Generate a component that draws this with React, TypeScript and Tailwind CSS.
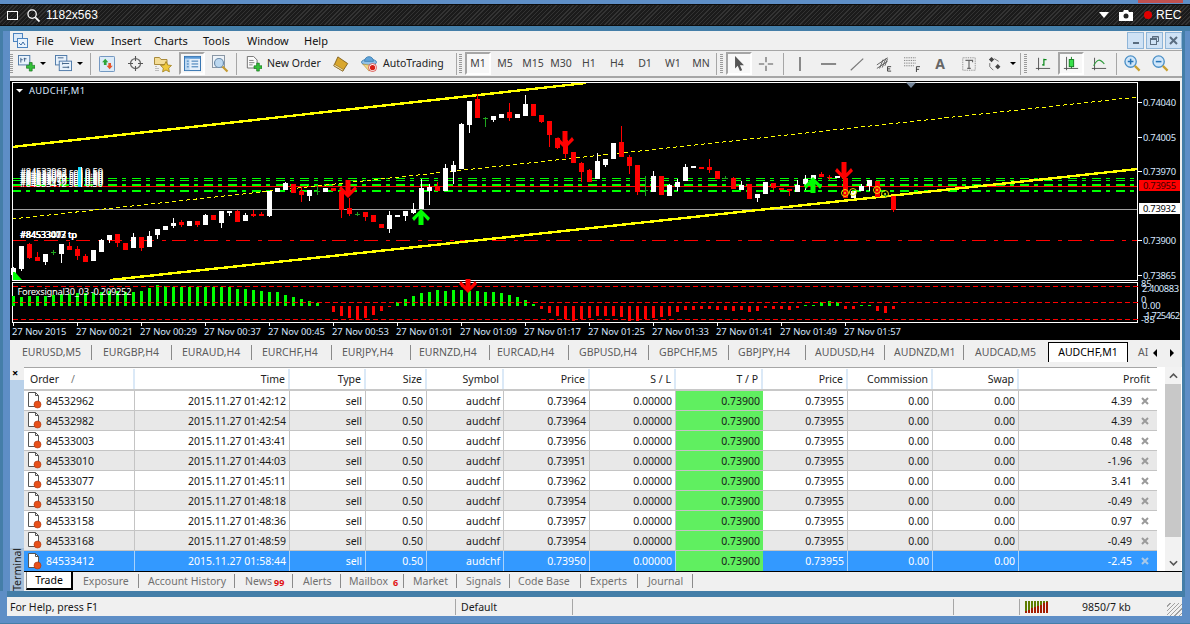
import React from 'react';

// [bodyTop, bodyBottom, wickTop, wickBottom, colour] measured on the 3x crops
type C = [number, number, number, number, string];
const candles: C[] = [
  [565,585,560,590,'w'],[498,568,498,572,'w'],[492,535,490,538,'r'],[531,543,516,543,'r'],[522,546,522,555,'w'],[516,518,510,525,'g'],
  [492,522,492,548,'w'],[498,510,486,510,'r'],[507,528,498,540,'r'],[528,546,522,546,'r'],[510,543,510,543,'w'],[480,516,477,516,'w'],
  [465,480,465,490,'w'],[462,489,462,500,'r'],[489,510,489,510,'r'],[471,504,459,504,'w'],[471,504,471,513,'r'],[468,502,453,502,'w'],
  [447,465,447,477,'w'],[438,450,438,450,'w'],[429,438,414,444,'w'],[426,435,420,441,'r'],[423,438,423,438,'w'],[423,435,423,441,'r'],
  [405,435,402,435,'w'],[405,420,405,420,'r'],[393,429,393,444,'w'],[393,399,393,408,'w'],[393,426,390,426,'r'],[405,423,399,423,'w'],
  [402,408,390,411,'r'],[402,408,396,408,'r'],[333,408,333,411,'w'],[324,336,324,336,'w'],[309,330,306,330,'w'],[312,339,312,339,'r'],
  [333,345,320,366,'r'],[330,348,330,363,'w'],[332,334,315,345,'g'],[324,336,324,336,'w'],[324,333,324,333,'r'],[333,390,333,414,'r'],
  [384,402,354,408,'r'],[401,403,396,408,'g'],[396,411,396,423,'r'],[405,426,405,426,'r'],[432,444,432,444,'r'],[405,447,393,459,'w'],
  [405,411,405,411,'w'],
  [393,408,393,423,'w'],[387,399,369,402,'w'],[324,387,297,387,'w'],[321,333,312,375,'w'],[318,333,305,333,'r'],[264,333,252,333,'w'],
  [255,275,243,312,'w'],[132,267,129,267,'w'],[63,135,63,159,'w'],[57,114,42,114,'r'],[113,115,112,141,'g'],[108,120,108,126,'w'],
  [102,114,102,114,'w'],[96,114,69,123,'r'],[102,114,102,114,'w'],[72,108,45,108,'w'],[72,108,72,108,'r'],[105,126,105,129,'r'],
  [123,165,123,201,'r'],[174,204,174,207,'r'],[180,222,180,234,'r'],[216,249,216,249,'r'],[249,276,246,306,'r'],[270,306,267,306,'r'],
  [243,297,219,297,'w'],[237,255,237,261,'w'],[189,237,189,237,'w'],[186,231,138,231,'r'],[231,258,225,282,'r'],[255,336,255,345,'r'],
  [329,331,288,348,'g'],[288,336,273,336,'w'],[288,345,288,345,'r'],[315,348,312,348,'w'],[306,321,297,333,'w'],[261,303,252,303,'w'],
  [258,264,258,264,'w'],[261,267,261,267,'r'],[261,270,237,279,'r'],[273,297,273,297,'r'],[293,295,288,297,'g'],[294,327,291,327,'r'],
  [315,330,303,330,'w'],[312,357,312,357,'r'],[342,354,342,366,'w'],[306,342,306,342,'w'],[309,324,309,330,'r'],[324,330,324,330,'r'],
  [327,333,327,348,'r'],[315,336,300,336,'w'],
  [297,312,285,330,'w'],[285,297,285,297,'w'],[282,291,276,291,'r'],[291,294,285,300,'r'],[288,294,288,294,'w'],[294,354,294,354,'r'],
  [333,354,333,354,'w'],[318,333,312,333,'w'],[300,318,300,333,'w'],[303,351,303,351,'r'],[344,346,340,350,'g'],[348,390,348,396,'r'],
];

const hist = [
  648,651,648,648,648,645,642,642,640,640,638,636,634,634,636,636,633,624,615,617,620,621,621,621,621,621,621,621,627,627,630,633,636,636,645,651,657,663,669,678,696,708,714,720,714,705,693,681,666,
  657,648,639,636,630,633,630,630,633,633,636,636,639,645,651,660,672,687,699,708,717,723,717,714,708,708,708,711,723,723,717,714,711,708,696,690,690,687,687,690,690,693,690,696,693,684,687,687,690,684,
  675,675,666,663,666,687,687,675,675,693,699,687,
];

const py = (z: number) => 80 + z / 3;
const candleFill: Record<string, string> = { w: '#ffffff', r: '#ff0000', g: '#1fa51f' };

const arrowDown = (cx: number, t: number, stem: number) =>
  `${cx - 2.5},${t} ${cx + 2.5},${t} ${cx + 2.5},${t + stem - 5} ${cx + 7},${t + stem - 10} ${cx + 9},${t + stem - 7} ${cx},${t + stem + 2} ${cx - 9},${t + stem - 7} ${cx - 7},${t + stem - 10} ${cx - 2.5},${t + stem - 5}`;
const arrowUp = (cx: number, b: number, stem: number) =>
  `${cx - 2.5},${b} ${cx + 2.5},${b} ${cx + 2.5},${b - stem + 5} ${cx + 7},${b - stem + 10} ${cx + 9},${b - stem + 7} ${cx},${b - stem - 2} ${cx - 9},${b - stem + 7} ${cx - 7},${b - stem + 10} ${cx - 2.5},${b - stem + 5}`;

const prices = [['0.74040', 102], ['0.74005', 137], ['0.73970', 171], ['0.73900', 240], ['0.73865', 275]] as const;
const times = ['27 Nov 2015','27 Nov 00:21','27 Nov 00:29','27 Nov 00:37','27 Nov 00:45','27 Nov 00:53','27 Nov 01:01','27 Nov 01:09','27 Nov 01:17','27 Nov 01:25','27 Nov 01:33','27 Nov 01:41','27 Nov 01:49','27 Nov 01:57'];
const axisText = '#d8e8ff';

const Chart = () => (
  <svg viewBox="10 81 1172 259" className="block w-[1172px] h-[259px] bg-black" fontFamily="'Noto Sans', sans-serif" fontSize="9.4">
    {/* horizontal levels */}
    <g shapeRendering="crispEdges" fill="none">
      <line x1="12" x2="1138" y1="209.5" y2="209.5" stroke="#a0a0a0" />
      <line x1="12" x2="1138" y1="240.5" y2="240.5" stroke="#ff0000" strokeDasharray="14 8 4 6" />
      <line x1="12" x2="1138" y1="178.5" y2="178.5" stroke="#00ff00" strokeDasharray="9 5 4 6" />
      <line x1="12" x2="1138" y1="180.5" y2="180.5" stroke="#00ff00" strokeDasharray="9 5 4 6" />
      <line x1="12" x2="1138" y1="185" y2="185" stroke="#00ff00" strokeWidth="2" strokeDasharray="9 5 4 6" />
      <line x1="12" x2="1138" y1="191" y2="191" stroke="#00ff00" strokeWidth="2" strokeDasharray="9 5 4 6" />
      <line x1="12" x2="1138" y1="186.5" y2="186.5" stroke="#ff0000" />
      <line x1="12" y1="219" x2="1138" y2="97" stroke="#ffff00" strokeDasharray="4 3" />
      <line x1="12" y1="147" x2="586" y2="83" stroke="#ffff00" strokeWidth="2.4" />
      <line x1="110" y1="280" x2="1138" y2="169" stroke="#ffff00" strokeWidth="2.4" />
    </g>

    {/* candles */}
    <g shapeRendering="crispEdges">
      {candles.map(([t, b, wt, wb, c], i) => (
        <g key={i} fill={candleFill[c]}>
          <rect x={13 + 8 * i} y={py(wt)} width="1" height={(wb - wt) / 3} />
          {c === 'g'
            ? <rect x={11 + 8 * i} y={py(t)} width="5" height="1" />
            : <rect x={11 + 8 * i} y={py(t)} width="5" height={(b - t) / 3} />}
        </g>
      ))}
    </g>

    {/* signal arrows */}
    <polygon points={arrowDown(348, 180, 16)} fill="#ff0000" />
    <polygon points={arrowDown(565, 131, 16)} fill="#ff0000" />
    <polygon points={arrowDown(844, 162, 16)} fill="#ff0000" />
    <polygon points={arrowUp(421, 225, 14)} fill="#00ff00" />
    <polygon points={arrowUp(813, 193, 14)} fill="#00ff00" />
    <polygon points="12,272 15,272 22,280 12,280" fill="#00ff00" />
    {[[845, 193], [853, 192], [877, 190], [885, 194]].map(([x, y]) => (
      <g key={x}>
        <circle cx={x} cy={y} r="3.5" fill="none" stroke="#e8e000" />
        <circle cx={x} cy={y} r="1" fill="#e8e000" />
      </g>
    ))}

    {/* overlapping order labels */}
    <g fill="#ffffff">
      {['#84532962 sell 0.50', '#84532982 sell 0.50', '#84533003 sell 0.50', '#84533010 sell 0.50', '#84533077 sell 0.50', '#84533150 sell 0.50', '#84533412 sell 0.50'].map((s, i) => (
        <text key={s} x="20" y={175 + i * 2} textLength="83" fontWeight="500">{s}</text>
      ))}
      <rect x="78" y="167" width="3" height="20" fill="#18dcff" />
      <rect x="81" y="167" width="1" height="20" />
      {['#84533003 tp', '#84533077 tp', '#84533412 tp'].map((s) => (
        <text key={s} x="20" y="238" textLength="57" fontWeight="500">{s}</text>
      ))}
    </g>

    {/* frames */}
    <g fill="none" stroke="#ffffff" shapeRendering="crispEdges">
      <rect x="12.5" y="82.5" width="1125" height="198" />
      <rect x="12.5" y="282.5" width="1125" height="40" />
    </g>
    <polygon points="906,82.5 916,82.5 911,88" fill="#75869a" />
    <polygon points="16,89 23,89 19.5,92.5" fill="#ffffff" />
    <text x="29" y="94" fill={axisText} textLength="56">AUDCHF,M1</text>

    {/* sub window */}
    <g shapeRendering="crispEdges">
      {hist.map((z, i) =>
        z < 678
          ? <rect key={i} x={12 + 8 * i} y={py(z)} width="3" height={(678 - z) / 3} fill="#00ff00" />
          : <rect key={i} x={12 + 8 * i} y={306} width="3" height={(z - 678) / 3} fill="#ff0000" />
      )}
      <line x1="13" x2="1138" y1="286.5" y2="286.5" stroke="#ff0000" strokeDasharray="5 3" />
      <line x1="13" x2="1138" y1="302.5" y2="302.5" stroke="#ff0000" strokeDasharray="5 3" />
      <line x1="13" x2="1138" y1="319.5" y2="319.5" stroke="#ff0000" strokeDasharray="5 3" />
    </g>
    <text x="17.5" y="295" fill="#ffffff" textLength="114">Forexsignal30_03 -0.209252</text>
    <polygon points={arrowDown(468, 279, 12)} fill="#ff0000" />

    {/* price axis */}
    <g fill={axisText}>
      {prices.map(([p, y]) => (
        <g key={p}>
          <rect x="1138" y={y} width="4" height="1" fill="#ffffff" />
          <text x="1143" y={y + 4} textLength="33">{p}</text>
        </g>
      ))}
      <text x="1141" y="287">85</text>
      <text x="1142" y="292" textLength="37">2.400883</text>
      <text x="1141" y="303">0</text>
      <text x="1142" y="309">0.00</text>
      <text x="1143" y="319" textLength="37">-1.725462</text>
      <text x="1141" y="323">-85</text>
    </g>
    <rect x="1139" y="180" width="41" height="11" fill="#ff0000" shapeRendering="crispEdges" />
    <text x="1143" y="189" fill="#400000" textLength="33">0.73955</text>
    <rect x="1139" y="203" width="41" height="11" fill="#ffffff" shapeRendering="crispEdges" />
    <text x="1143" y="212" fill="#000000" textLength="33">0.73932</text>
    <rect x="1180" y="81" width="2" height="259" fill="#f0f0f0" />

    {/* time axis */}
    {times.map((t, i) => (
      <g key={t}>
        <rect x={13 + 64 * i} y="322" width="1" height="4" fill="#ffffff" />
        <text x={12 + 64 * i} y="335" fill={axisText}>{t}</text>
      </g>
    ))}
  </svg>
);

// ---- toolbar icons ----
const Ico = ({ w = 17, children, className = '' }: { w?: number; children: React.ReactNode; className?: string }) => (
  <svg viewBox="0 0 18 18" width={w} height={w} className={`shrink-0 ${className}`}>{children}</svg>
);

const GreenPlus = ({ x = 9, y = 8 }: { x?: number; y?: number }) => (
  <path transform={`translate(${x} ${y})`} d="M3 0h3v3h3v3H6v3H3V6H0V3h3z" fill="#35c13a" stroke="#126d18" strokeWidth="0.7" />
);
const NewChartIcon = () => (
  <Ico>
    <rect x="0.5" y="0.5" width="12" height="10" fill="#e8f2fc" stroke="#4d78a8" />
    <path d="M3 3v5M3 5h2M7 3v4M6 4h3" stroke="#3d5f85" fill="none" />
    <GreenPlus />
  </Ico>
);
const ProfilesIcon = () => (
  <Ico>
    <rect x="0.5" y="0.5" width="12" height="10" fill="#e8f2fc" stroke="#4d78a8" />
    <rect x="4.5" y="6.5" width="13" height="10" fill="#e8f2fc" stroke="#4d78a8" />
    <path d="M3 3h6M8 9h7M8 13h7M8 8v2M14 12v2" stroke="#3d5f85" fill="none" />
  </Ico>
);
const MarketIcon = () => (
  <Ico w={16}>
    <rect x="0.5" y="0.5" width="17" height="17" rx="1" fill="#dcebf8" stroke="#5e89b8" />
    <path d="M7 3l3.5 4H8.5v3h-3V7H3.500z" fill="#2ea53a" />
    <path d="M12 15l-3.500-4h2V8h3v3h2z" fill="#e8552c" />
  </Ico>
);
const NavIcon = () => (
  <Ico w={15}>
    <circle cx="9" cy="9" r="6" fill="none" stroke="#6b6b6b" strokeWidth="1.500" />
    <path d="M9 0v6M9 12v6M0 9h6M12 9h6" stroke="#555" strokeWidth="1.300" />
  </Ico>
);
const FolderStarIcon = () => (
  <Ico w={18}>
    <path d="M0.500 2.500h5l1.500 2h6v5h-12.500z" fill="#f4dd96" stroke="#a98a3a" />
    <path d="M12 6.500l1.700 3.500 3.800.5-2.800 2.600.7 3.800-3.400-1.900-3.400 1.900.7-3.800-2.800-2.600 3.800-.5z" fill="#f0c93c" stroke="#a07f1a" strokeWidth="0.8" />
    <path d="M2 11v6M4 13v4" stroke="#888" strokeDasharray="1 1" />
  </Ico>
);
const TerminalIcon = () => (
  <Ico>
    <rect x="0.500" y="1.500" width="17" height="15" fill="#e6f0fa" stroke="#2d6fae" />
    <rect x="1" y="2" width="16" height="2" fill="#5a9ad8" />
    <rect x="1" y="4" width="5" height="12" fill="#bcd8f2" />
    <path d="M3 6.500h2M3 9.500h2M3 12.500h2M8 6.500h7M8 9.500h7M8 12.500h7" stroke="#2d6fae" />
  </Ico>
);
const TesterIcon = () => (
  <Ico w={18}>
    <rect x="1.500" y="0.500" width="12" height="12" fill="#eef3f8" stroke="#8a97a5" />
    <circle cx="8" cy="8" r="4.500" fill="#bcd8f0" stroke="#6c8cab" strokeWidth="1.200" />
    <path d="M11.500 11.500l5 5" stroke="#c49a32" strokeWidth="2.200" />
  </Ico>
);
const NewOrderIcon = () => (
  <Ico w={16}>
    <path d="M1.500 0.500h7l4 4v9h-11z" fill="#fbfbfb" stroke="#666" />
    <path d="M3.500 5h5M3.500 7.500h6M3.500 10h4" stroke="#777" />
    <GreenPlus />
  </Ico>
);
const EditorIcon = () => (
  <Ico w={16}>
    <path d="M5.500 1l11 7.500-5.500 8.500-10-6z" fill="#d9a72e" stroke="#7e5b12" />
    <path d="M1 11l10 6 0.500-1.800-10-6z" fill="#f6e6b0" stroke="#7e5b12" strokeWidth="0.6" />
  </Ico>
);
const AutoTradingIcon = () => (
  <Ico w={16}>
    <ellipse cx="9" cy="7" rx="8.500" ry="3.500" fill="#8fc0e6" stroke="#3e7fb3" />
    <path d="M4 6c0-7 10-7 10 0z" fill="#5fa3d9" stroke="#3e7fb3" />
    <path d="M2 9l7 8 4-6z" fill="#f1d88a" stroke="#b69233" strokeWidth="0.7" />
    <circle cx="13" cy="13" r="4.500" fill="#ffffff" stroke="#d0201a" strokeWidth="0.8" />
    <circle cx="13" cy="13" r="3" fill="#d81e16" />
  </Ico>
);
const DrawIcon = ({ children }: { children: React.ReactNode }) => <Ico w={16}>{children}</Ico>;
const Sep = ({ className = '' }: { className?: string }) => <div className={`w-px h-[22px] bg-[#a6a6a6] shrink-0 ${className}`} />;
const Grip = ({ className = '' }: { className?: string }) => (
  <div className={`w-[3px] h-[20px] shrink-0 bg-[repeating-linear-gradient(180deg,#9a9a9a_0,#9a9a9a_1px,transparent_1px,transparent_2px)] ${className}`} />
);
const Drop = ({ className = '' }: { className?: string }) => (
  <div className={`shrink-0 w-0 h-0 border-x-[3px] border-x-transparent border-t-[3px] border-t-black ${className}`} />
);
const ActiveBox = ({ children, className = '' }: { children: React.ReactNode; className?: string }) => (
  <div className={`shrink-0 w-[26px] h-[23px] flex items-center justify-center border-2 border-t-[#a6a6a6] border-l-[#a6a6a6] border-r-white border-b-white bg-[#f8f8f8] ${className}`}>{children}</div>
);
const chartTabs = [
  ['EURUSD,M5', 'w-[82px] pl-[12px]'], ['EURGBP,H4', 'w-[80px] pl-[11px]'], ['EURAUD,H4', 'w-[80px] pl-[10px]'], ['EURCHF,H4', 'w-[80px] pl-[10px]'],
  ['EURJPY,H4', 'w-[79px] pl-[10px]'], ['EURNZD,H4', 'w-[79px] pl-[8px]'], ['EURCAD,H4', 'w-[79px] pl-[7px]'], ['GBPUSD,H4', 'w-[80px] pl-[10px]'],
  ['GBPCHF,M5', 'w-[80px] pl-[10px]'], ['GBPJPY,H4', 'w-[77px] pl-[9px]'], ['AUDUSD,H4', 'w-[79px] pl-[9px]'], ['AUDNZD,M1', 'w-[79px] pl-[9px]'],
  ['AUDCAD,M5', 'w-[84px] pl-[11px]'],
];

const rows = [
  ['84532962', '01:42:12', '0.73964', '4.39'],
  ['84532982', '01:42:54', '0.73964', '4.39'],
  ['84533003', '01:43:41', '0.73956', '0.48'],
  ['84533010', '01:44:03', '0.73951', '-1.96'],
  ['84533077', '01:45:11', '0.73962', '3.41'],
  ['84533150', '01:48:18', '0.73954', '-0.49'],
  ['84533158', '01:48:36', '0.73957', '0.97'],
  ['84533168', '01:48:59', '0.73954', '-0.49'],
  ['84533412', '01:58:44', '0.73950', '-2.45'],
];

const cols = 'grid grid-cols-[111px_155px_76px_61px_77px_86px_86px_87px_85px_85px_86px_138px]';
const heads = ['Time', 'Type', 'Size', 'Symbol', 'Price', 'S / L', 'T / P', 'Price', 'Commission', 'Swap'];

const OrderIcon = () => (
  <svg viewBox="0 0 15 17" width="15" height="17" className="shrink-0">
    <path d="M1.500 0.500h7l3 3v11h-10z" fill="#fff" stroke="#555" />
    <path d="M8.500 0.500v3h3" fill="none" stroke="#555" />
    <circle cx="10.500" cy="12.500" r="3.500" fill="#e8501a" stroke="#a8320c" strokeWidth="0.6" />
  </svg>
);

const bottomTabs = [
  ['Exposure', 'w-[66px] pl-[10px]'], ['Account History', 'w-[96px] pl-[9px]'], ['News', 'w-[58px] pl-[10px]'], ['Alerts', 'w-[48px] pl-[10px]'],
  ['Mailbox', 'w-[63px] pl-[8px]'], ['Market', 'w-[53px] pl-[9px]'], ['Signals', 'w-[53px] pl-[9px]'], ['Code Base', 'w-[71px] pl-[8px]'],
  ['Experts', 'w-[57px] pl-[9px]'], ['Journal', 'w-[55px] pl-[10px]'],
];

const App: React.FC = () => (
  <div className="w-[1190px] h-[624px] overflow-hidden bg-[#5e8ec6] font-['Noto_Sans',sans-serif] text-[10.5px] leading-none text-[#1a1a1a] flex flex-col">
    {/* recorder strip */}
    <div className="h-[4px] flex justify-end shrink-0">
      <div className="w-[45px] h-[3px] mr-[7px] bg-[#c0504f]" />
    </div>
    <div className="h-[22px] shrink-0 flex items-center text-white bg-[#232323] bg-[repeating-linear-gradient(135deg,#333333_0,#333333_1px,#1b1b1b_1px,#1b1b1b_3px)] border-y border-y-[#0c0c0c]">
      <div className="ml-[7px] w-[11px] h-[9px] border border-white" />
      <svg viewBox="0 0 14 14" width="13" height="13" className="ml-[9px]" fill="none" stroke="#fff" strokeWidth="1.400">
        <circle cx="5.500" cy="5.500" r="4.500" />
        <path d="M9 9l4.500 4.500" strokeWidth="2" />
      </svg>
      <span className="ml-[6px] text-[12px] font-['Liberation_Sans',sans-serif]">1182x563</span>
      <div className="ml-auto w-0 h-0 border-x-[5px] border-x-transparent border-t-[6px] border-t-white" />
      <svg viewBox="0 0 14 11" width="14" height="11" className="ml-[10px]" fill="#fff">
        <path d="M0 2h4l1-2h4l1 2h4v9H0z" />
        <circle cx="7" cy="6" r="2.500" fill="#222" />
      </svg>
      <div className="ml-[11px] w-[8px] h-[8px] rounded-full bg-[#e00000]" />
      <span className="ml-[4px] mr-[8px] w-[26px] text-[12px] font-['Liberation_Sans',sans-serif]">REC</span>
    </div>
    <div className="h-[5px] shrink-0 bg-[#447ea8]" />

    <div className="h-[560px] shrink-0 flex">
      <div className="w-[10px] shrink-0 border-l-[3px] border-l-[#447ea8]" />
      <div className="w-[1172px] shrink-0 bg-[#f0f0f0] flex flex-col">
        {/* menu */}
        <div className="h-[20px] shrink-0 flex items-center text-[#111] border-b border-b-[#a6a6a6] text-[11px]">
          <svg viewBox="0 0 15 15" width="15" height="15" className="ml-[3px]">
            <rect x="0.500" y="0.500" width="9" height="8" fill="#dbe9f8" stroke="#4d84c0" />
            <rect x="4.500" y="5.500" width="10" height="9" fill="#eaf3fc" stroke="#4d84c0" />
            <path d="M6 10l2 2 2-3 2 3" fill="none" stroke="#3f6ea5" />
          </svg>
          <span className="ml-[8px] w-[34px]">File</span>
          <span className="w-[41px]">View</span>
          <span className="w-[43px]">Insert</span>
          <span className="w-[49px]">Charts</span>
          <span className="w-[44px]">Tools</span>
          <span className="w-[57px]">Window</span>
          <span>Help</span>
          <div className="ml-auto flex gap-[2px]">
            <div className="w-[17px] h-[17px] flex items-end justify-center pb-[4px] bg-[#cfe2f5] border border-[#8fb5d8]">
              <div className="w-[6px] h-[2px] bg-[#5a6d80]" />
            </div>
            <div className="w-[17px] h-[17px] flex items-center justify-center bg-[#cfe2f5] border border-[#8fb5d8]">
              <svg viewBox="0 0 9 9" width="9" height="9" fill="none" stroke="#5a6d80"><path d="M2.500 2.500v-2h6v5h-2" /><rect x="0.500" y="2.500" width="6" height="6" /><path d="M0 3.500h7M2 1h6" /></svg>
            </div>
            <div className="w-[17px] h-[17px] flex items-center justify-center bg-[#cfe2f5] border border-[#8fb5d8]">
              <svg viewBox="0 0 9 9" width="9" height="9" stroke="#5a6d80" strokeWidth="2"><path d="M1 1l7 7M8 1L1 8" /></svg>
            </div>
          </div>
        </div>

        {/* toolbar */}
        <div className="h-[27px] shrink-0 flex items-center text-[#444] border-b-2 border-b-[#a6a6a6] text-[10.5px] whitespace-nowrap">
          <Grip />
          <div className="ml-[5px]"><NewChartIcon /></div><Drop className="ml-[5px]" />
          <div className="ml-[9px]"><ProfilesIcon /></div><Drop className="ml-[5px]" />
          <Sep className="ml-[7px]" />
          <div className="ml-[8px]"><MarketIcon /></div>
          <div className="ml-[13px]"><NavIcon /></div>
          <div className="ml-[11px]"><FolderStarIcon /></div>
          <ActiveBox className="ml-[7px]"><TerminalIcon /></ActiveBox>
          <div className="ml-[6px]"><TesterIcon /></div>
          <Sep className="ml-[7px]" />
          <div className="ml-[9px]"><NewOrderIcon /></div>
          <span className="ml-[5px] w-[56px] shrink-0 text-[#222]">New Order</span>
          <div className="ml-[10px]"><EditorIcon /></div>
          <div className="ml-[12px]"><AutoTradingIcon /></div>
          <span className="ml-[6px] w-[64px] shrink-0 text-[#222]">AutoTrading</span>
          <Sep className="ml-[9px]" />
          <Grip className="ml-[2px]" />
          <ActiveBox className="ml-[3px]">M1</ActiveBox>
          {['M5', 'M15', 'M30', 'H1', 'H4', 'D1', 'W1', 'MN'].map((p) => (
            <span key={p} className="w-[28px] text-center shrink-0">{p}</span>
          ))}
          <Sep className="ml-px" />
          <Grip className="ml-[3px]" />
          <ActiveBox className="ml-[3px]">
            <svg viewBox="0 0 12 18" width="11" height="16"><path d="M1 0v14l3-3 2.500 6 2.500-1-2.500-5.500H11z" fill="#555" /></svg>
          </ActiveBox>
          <div className="ml-[6px]">
            <DrawIcon><path d="M9 1v6M9 11v6M1 9h6M11 9h6" stroke="#555" strokeWidth="1.200" /></DrawIcon>
          </div>
          <Sep className="ml-[9px]" />
          <div className="ml-[8px]"><DrawIcon><path d="M9 1v16" stroke="#555" strokeWidth="1.500" /></DrawIcon></div>
          <div className="ml-[13px]"><DrawIcon><path d="M0 9h17" stroke="#555" strokeWidth="1.500" /></DrawIcon></div>
          <div className="ml-[12px]"><DrawIcon><path d="M2 16L16 3" stroke="#777" strokeWidth="1.300" /></DrawIcon></div>
          <div className="ml-[11px]">
            <DrawIcon><path d="M1 10l12-8M1 14l12-8M4 14l4-10M7 13l4-10M10 11l3-8" stroke="#555" fill="none" /><path d="M13 12h4M13 14.500h3M13 17h4M13 12v5" stroke="#333" /></DrawIcon>
          </div>
          <div className="ml-[12px]">
            <DrawIcon><path d="M0 2h14M0 5h14M0 8h14M0 11h12" stroke="#666" strokeDasharray="1 1" /><path d="M14 12h4M14 15h3M14 12v6" stroke="#333" /></DrawIcon>
          </div>
          <span className="ml-[12px] w-[16px] shrink-0 text-center text-[14px] font-bold text-[#666]">A</span>
          <div className="ml-[13px]">
            <DrawIcon><rect x="2" y="2" width="14" height="14" fill="none" stroke="#777" strokeDasharray="1 1" /><path d="M5 5h8v2M9 5v9M7 14h4" stroke="#666" strokeWidth="1.300" fill="none" /></DrawIcon>
          </div>
          <div className="ml-[11px]">
            <DrawIcon><path d="M4 1l3 3-3 3-3-3zM11 9l3 3-3 3-3-3z" fill="#444" /><path d="M2 8v4l4 4M7 3l5 3" stroke="#666" fill="none" /></DrawIcon>
          </div>
          <Drop className="ml-[6px]" />
          <Sep className="ml-[4px]" />
          <Grip className="ml-[3px]" />
          <div className="ml-[8px]">
            <DrawIcon><path d="M4 2v14M1 14h16" stroke="#4a4a4a" /><path d="M10 3v8M8 10h2M10 4h3" stroke="#0c8a1c" strokeWidth="1.400" /></DrawIcon>
          </div>
          <ActiveBox className="ml-[7px]">
            <DrawIcon><path d="M4 1v15M1 14h16" stroke="#4a4a4a" /><rect x="7" y="4" width="5" height="8" fill="#38e04a" stroke="#0d7a1a" /><path d="M9.500 1v3M9.500 12v2" stroke="#0d7a1a" /></DrawIcon>
          </ActiveBox>
          <div className="ml-[7px]">
            <DrawIcon><path d="M4 2v14M1 14h16" stroke="#4a4a4a" /><path d="M3 11C7 3 10 3 15 9" stroke="#2f9a3c" fill="none" strokeWidth="1.300" /></DrawIcon>
          </div>
          <Sep className="ml-[9px]" />
          {[0, 1].map((n) => (
            <svg key={n} viewBox="0 0 18 18" width="17" height="17" className={n === 0 ? 'ml-[7px] shrink-0' : 'ml-[11px] shrink-0'}>
              <circle cx="7" cy="7" r="6" fill="#cfe6fa" stroke="#4a8fc6" strokeWidth="1.400" />
              <path d={n === 0 ? 'M4 7h6M7 4v6' : 'M4 7h6'} stroke="#2573b5" strokeWidth="1.600" />
              <path d="M11.500 11.500l5 5" stroke="#c9a030" strokeWidth="2.400" />
            </svg>
          ))}
        </div>

        <div className="h-[3px] shrink-0" />
        <Chart />

        {/* chart tabs */}
        <div className="h-[22px] shrink-0 flex items-end text-[#5c5c5c]">
          <div className="h-[19px] flex items-center">
            {chartTabs.map(([name, cls]) => (
              <div key={name} className={`${cls} h-[15px] flex items-center shrink-0 border-r border-r-[#8a8a8a] last:border-r-0`}>{name}</div>
            ))}
          </div>
          <div className="w-[80px] h-[20px] shrink-0 flex items-center justify-center bg-white text-black border-t border-x border-black">AUDCHF,M1</div>
          <span className="ml-[10px] w-[9px] h-[19px] flex items-center shrink-0">AI</span>
          <div className="ml-[6px] h-[19px] flex items-center">
            <div className="w-0 h-0 border-y-[4px] border-y-transparent border-r-[4px] border-r-black" />
            <div className="ml-[13px] w-0 h-0 border-y-[4px] border-y-transparent border-l-[4px] border-l-black" />
          </div>
        </div>

        {/* terminal */}
        <div className="flex-1 flex min-h-0">
          <div className="w-[14px] shrink-0 flex flex-col bg-[#b9d1ea]">
            <div className="h-[18px] pt-[5px] pl-[2px] bg-[#f0f0f0] text-black text-[11px] font-bold">×</div>
            <div className="flex-1" />
            <div className="h-[43px] flex items-center justify-center bg-[#a7bfd8] text-[#222] text-[10.5px]">
              <span className="[writing-mode:vertical-rl] rotate-180">Terminal</span>
            </div>
          </div>
          <div className="flex-1 flex flex-col min-w-0">
            <div className="h-[5px] shrink-0" />
            <div className="h-[204px] shrink-0 flex bg-white">
              <div className="w-[1133px] shrink-0">
                <div className={`${cols} h-[24px] pt-px border-t border-t-[#a6a6a6] border-b-2 border-b-[#c8c8c8] bg-white text-[#222] text-[10.5px]`}>
                  <div className="flex items-center pl-[6px] border-r-2 border-r-[#dbe9f7]">Order<span className="ml-[12px] text-[#777]">/</span></div>
                  {heads.map((h, i) => (
                    <div key={i} className="flex items-center justify-end pr-[3px] border-r-2 border-r-[#dbe9f7]">{h}</div>
                  ))}
                  <div className="flex items-center justify-end pr-[7px]">Profit</div>
                </div>
                {rows.map(([id, time, price, profit], i) => {
                  const sel = i === 8;
                  const bg = sel ? 'bg-[#3399ff] text-white' : i % 2 ? 'bg-[#e8e8e8]' : 'bg-white';
                  const cell = `flex items-center justify-end pr-[3px] border-r ${sel ? 'border-r-[#a9d2fb]' : 'border-r-[#c4c4c4]'}`;
                  return (
                    <div key={id} className={`${cols} h-[20px] ${bg} ${sel ? '' : 'border-b border-b-[#c4c4c4]'}`}>
                      <div className={`${cell} !justify-start pl-[3px]`}><OrderIcon /><span className="ml-[4px] pt-px">{id}</span></div>
                      <div className={cell}><span className="pt-px">2015.11.27 {time}</span></div>
                      <div className={cell}><span className="pt-px">sell</span></div>
                      <div className={cell}><span className="pt-px">0.50</span></div>
                      <div className={cell}><span className="pt-px">audchf</span></div>
                      <div className={cell}><span className="pt-px">{price}</span></div>
                      <div className={cell}><span className="pt-px">0.00000</span></div>
                      <div className="flex items-center justify-end pr-[3px] bg-[#60ef60] text-[#1a1a1a]"><span className="pt-px">0.73900</span></div>
                      <div className={cell}><span className="pt-px">0.73955</span></div>
                      <div className={cell}><span className="pt-px">0.00</span></div>
                      <div className={cell}><span className="pt-px">0.00</span></div>
                      <div className="flex items-center justify-end">
                        <span className="pt-px">{profit}</span>
                        <svg viewBox="0 0 8 8" width="8" height="8" className="ml-[9px] mr-[8px]" stroke={sel ? '#a8c8e8' : '#9a9a9a'} strokeWidth="2"><path d="M1 1l6 6M7 1L1 7" /></svg>
                      </div>
                    </div>
                  );
                })}
              </div>
              <div className="flex-1 flex flex-col items-end bg-white">
                <div className="w-[16px] h-full mr-[1px] flex flex-col bg-[#f2f2f2]">
                  <div className="h-[17px] flex items-center justify-center">
                    <svg viewBox="0 0 10 6" width="9" height="6" fill="none" stroke="#555" strokeWidth="1.800"><path d="M1 5l4-4 4 4" /></svg>
                  </div>
                  <div className="h-[153px] bg-[#c8c8c8]" />
                  <div className="mt-auto h-[17px] flex items-center justify-center">
                    <svg viewBox="0 0 10 6" width="9" height="6" fill="none" stroke="#555" strokeWidth="1.800"><path d="M1 1l4 4 4-4" /></svg>
                  </div>
                </div>
              </div>
            </div>

            {/* bottom tabs */}
            <div className="flex-1 flex items-start border-t border-t-black text-[#707070]">
              <div className="ml-[2px] w-[47px] h-[18px] shrink-0 flex items-center justify-center bg-white text-black border-l border-l-[#888] border-b-2 border-b-black border-r-2 border-r-black">Trade</div>
              <div className="flex h-[18px] items-center">
                {bottomTabs.map(([name, cls]) => (
                  <div key={name} className={`${cls} h-[14px] shrink-0 flex items-center border-r border-r-[#8a8a8a]`}>
                    {name}
                    {name === 'News' && <span className="ml-[2px] mt-[3px] text-[9px] font-bold text-[#e01010]">99</span>}
                    {name === 'Mailbox' && <span className="ml-[5px] mt-[3px] text-[9px] font-bold text-[#e01010]">6</span>}
                  </div>
                ))}
              </div>
            </div>
          </div>
        </div>
      </div>
      <div className="w-[8px] shrink-0 border-l-[3px] border-l-[#447ea8]" />
    </div>

    {/* status bar */}
    <div className="h-[6px] shrink-0 ml-[7px] mr-[5px] bg-[#447ea8]" />
    <div className="h-[19px] shrink-0 ml-[7px] mr-[8px] flex items-center bg-[#f0f0f0] text-[#1a1a1a] text-[10.5px]">
      <div className="w-[449px] pl-[3px] pt-px h-[16px] flex items-center border-r border-r-[#a6a6a6]">For Help, press F1</div>
      <div className="w-[117px] pl-[5px] pt-px h-[16px] flex items-center border-r border-r-[#a6a6a6]">Default</div>
      <div className="w-[381px] h-[16px] border-r border-r-[#a6a6a6]" />
      <div className="w-[66px] h-[16px] border-r border-r-[#a6a6a6]" />
      <svg viewBox="0 0 24 12" width="24" height="12" className="ml-[5px] shrink-0" shapeRendering="crispEdges">
        {[0, 1, 2, 3, 4, 5, 6, 7].map((n) => (
          <g key={n}>
            <rect x={n * 3} y="0" width="2" height="12" fill="#5f7d00" />
            <rect x={n * 3} y={10 - n * 1.300} width="2" height={2 + n * 1.300} fill="#a31b00" />
          </g>
        ))}
      </svg>
      <span className="ml-[33px] pt-px">9850/7 kb</span>
      <div className="ml-auto w-[15px] h-[13px] self-end bg-[repeating-linear-gradient(135deg,transparent_0,transparent_2px,#a0a0a0_2px,#a0a0a0_3px)]" />
    </div>
    <div className="flex-1 bg-[#5e8ec6] border-b border-b-[#447ea8]" />
  </div>
);

export default App;
